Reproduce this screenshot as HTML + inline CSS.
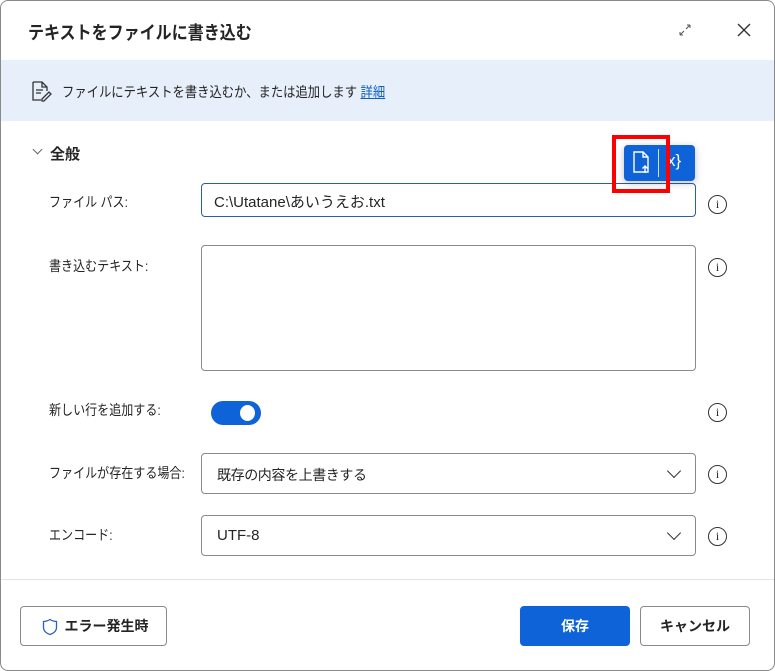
<!DOCTYPE html>
<html><head><meta charset="utf-8"><style>
*{box-sizing:border-box;margin:0;padding:0}
body{width:775px;height:671px;background:#fff;font-family:"Liberation Sans","Noto Sans CJK JP",sans-serif;color:#242424;position:relative;overflow:hidden}
.win{position:absolute;left:0;top:0;width:775px;height:671px;border:1px solid #8a8a8a;border-radius:8px;background:#fff}
.abs{position:absolute}
.lbl{position:absolute;left:48px;font-size:14px;color:#242424;transform:scaleX(0.86);transform-origin:0 0;white-space:nowrap}
.box{position:absolute;left:200px;width:495px;border:1px solid #8a8a8a;border-radius:4px;background:#fff}
.info{position:absolute;left:707px;width:19px;height:19px;border:1.5px solid #333;border-radius:50%;font-size:12px;text-align:center;line-height:16px;font-family:"Liberation Serif",serif}
.chev{position:absolute;right:12px;top:13px;width:10px;height:10px;border-right:1.5px solid #333;border-bottom:1.5px solid #333;transform:rotate(45deg)}
.btn{position:absolute;top:605px;height:40px;border:1px solid #8a8a8a;border-radius:4px;font-size:14px;font-weight:bold;text-align:center;line-height:38px}
</style></head><body>
<div class="win">
<div class="abs" style="left:27px;top:18px;font-size:18px;font-weight:bold;transform:scaleX(0.89);transform-origin:0 0;white-space:nowrap">テキストをファイルに書き込む</div>
<svg class="abs" style="left:677px;top:22px" width="14" height="14" viewBox="0 0 14 14"><path d="M2 12L6 8M12 2L8 6M2 12h3M2 12V9M12 2H9M12 2v3" stroke="#555" stroke-width="1" fill="none"/></svg>
<svg class="abs" style="left:736px;top:22px" width="14" height="14" viewBox="0 0 14 14"><path d="M1 1L13 13M13 1L1 13" stroke="#333" stroke-width="1.4"/></svg>
<div class="abs" style="left:0;top:59px;width:773px;height:61px;background:#e7effa"></div>
<svg class="abs" style="left:29px;top:79px" width="22" height="22" viewBox="0 0 22 22"><path d="M3 2h9l5 5v4M3 2v18h8M12 2v5h5" stroke="#333" stroke-width="1.3" fill="none"/><path d="M6 10h7M6 13h5M12 19l7-7 2 2-7 7h-2z" stroke="#333" stroke-width="1.3" fill="none"/></svg>
<div class="abs" style="left:61px;top:81px;font-size:14px;transform:scaleX(0.88);transform-origin:0 0;white-space:nowrap">ファイルにテキストを書き込むか、または追加します <span style="color:#0f5fc0;text-decoration:underline">詳細</span></div>
<div class="abs" style="left:33px;top:145px;width:7px;height:7px;border-right:1px solid #666;border-bottom:1px solid #666;transform:rotate(45deg)"></div>
<div class="abs" style="left:49px;top:142px;font-size:15px;font-weight:bold">全般</div>

<div class="lbl" style="top:191px">ファイル パス:</div>
<div class="box" style="top:182px;height:34px;border-color:#2a5ea8;font-size:15px;padding:7px 12px">C:\Utatane\あいうえお.txt</div>
<div class="info" style="top:194px">i</div>

<div class="abs" style="left:623px;top:144px;width:71px;height:36px;background:#0f63d8;border-radius:4px;box-shadow:0 2px 8px rgba(0,0,0,.25)"></div>
<svg class="abs" style="left:629px;top:148px" width="24" height="28" viewBox="0 0 24 28"><path d="M4 3h9l5 5v15H4z M13 3v5h5" stroke="#fff" stroke-width="1.4" fill="none"/><path d="M15 24v-7M12.5 19.5l2.5-2.5 2.5 2.5" stroke="#fff" stroke-width="1.4" fill="none"/></svg>
<div class="abs" style="left:657px;top:148px;width:1px;height:28px;background:#cfe0fa"></div>
<div class="abs" style="left:666px;top:150px;color:#fff;font-size:17px">x}</div>
<div class="abs" style="left:611px;top:134px;width:58px;height:58px;border:4px solid #f00"></div>

<div class="lbl" style="top:255px">書き込むテキスト:</div>
<div class="box" style="top:244px;height:126px"></div>
<div class="info" style="top:257px">i</div>

<div class="lbl" style="top:399px">新しい行を追加する:</div>
<div class="abs" style="left:210px;top:400px;width:50px;height:24px;background:#0f63d8;border-radius:12px"></div>
<div class="abs" style="left:239px;top:404px;width:15px;height:16px;background:#fff;border-radius:50%"></div>
<div class="info" style="top:402px">i</div>

<div class="lbl" style="top:462px">ファイルが存在する場合:</div>
<div class="box" style="top:452px;height:41px;font-size:14px;padding:11px 15px;letter-spacing:-0.4px">既存の内容を上書きする<div class="chev" style="top:12px;right:16px"></div></div>
<div class="info" style="top:464px">i</div>

<div class="lbl" style="top:524px">エンコード:</div>
<div class="box" style="top:514px;height:41px;font-size:15px;padding:11px 15px">UTF-8<div class="chev" style="top:12px;right:16px"></div></div>
<div class="info" style="top:526px">i</div>

<div class="abs" style="left:0;top:578px;width:773px;height:1px;background:#e4e4e4"></div>
<div class="btn" style="left:19px;width:147px"><svg style="position:absolute;left:21px;top:11px" width="16" height="18" viewBox="0 0 16 18"><path d="M8 1.5C5.5 3 3.5 3.5 1.5 3.5v6c0 3.5 3 6 6.5 7 3.5-1 6.5-3.5 6.5-7v-6C12.5 3.5 10.5 3 8 1.5z" stroke="#2b5fbf" stroke-width="1.3" fill="none"/></svg><span style="margin-left:26px">エラー発生時</span></div>
<div class="btn" style="left:519px;width:110px;background:#0f63d8;border-color:#0f63d8;color:#fff">保存</div>
<div class="btn" style="left:639px;width:110px">キャンセル</div>
</div>
</body></html>
